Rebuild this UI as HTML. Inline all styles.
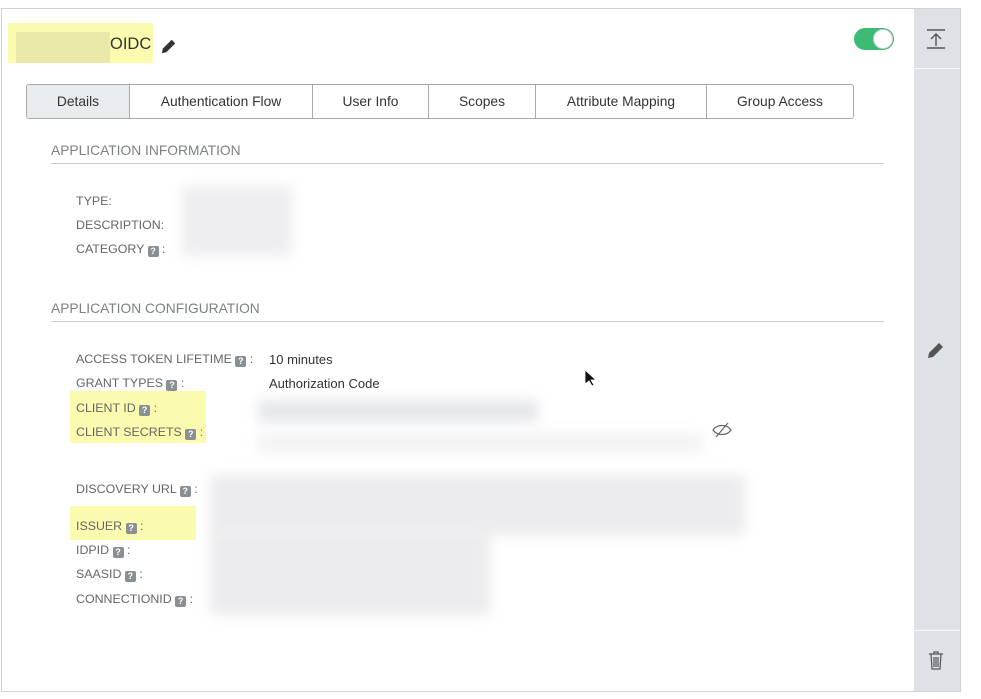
<!DOCTYPE html>
<html><head><style>
*{box-sizing:border-box;margin:0;padding:0}
body{width:981px;height:699px;background:#fff;font-family:"Liberation Sans",sans-serif;position:relative;overflow:hidden;color:#333}
.a{position:absolute}
.panel{left:1px;top:8px;width:960px;height:684px;border:1px solid #cfd3d6;background:#fff}
.side{left:914px;top:9px;width:46px;height:682px;background:#dde2e6}
.lbl{position:absolute;left:76px;font-size:12.4px;color:#666;white-space:nowrap}
.q{display:inline-block;width:11px;height:11px;background:#8a8f94;border-radius:2px;color:#fff;font-size:9px;line-height:11px;text-align:center;font-weight:bold;vertical-align:-1px}
.sec{position:absolute;left:51px;font-size:13.8px;color:#7d8085;width:833px;border-bottom:1px solid #ccc;padding-bottom:5px}
.tabs{left:26px;top:84px;height:35px;display:flex;border:1px solid #aaa;border-radius:3px;overflow:hidden}
.tabs div{font-size:13.8px;color:#333;display:flex;align-items:center;justify-content:center;border-right:1px solid #aaa;height:100%}
.tabs div:last-child{border-right:none}
.blur{position:absolute;background:#e6e7ea;filter:blur(6px)}
.hl{position:absolute;background:#fbfbb0}
</style></head><body>
<div class="a panel"></div>
<div class="a side"></div>
<div class="a" style="left:914px;top:68px;width:46px;height:1px;background:#f4f6f7"></div>
<div class="a" style="left:914px;top:630px;width:46px;height:1px;background:#f4f6f7"></div>
<svg class="a" style="left:926px;top:28px" width="20" height="22" viewBox="0 0 20 22"><path d="M1 2h18M1 20h18M10 18V7M5 11l5-5 5 5" stroke="#555" stroke-width="1.4" fill="none"/></svg>
<svg class="a" style="left:927px;top:341px" width="18" height="18" viewBox="0 0 18 18"><path d="M1 17l1-5L12 2l4 4L6 16z" fill="#555"/></svg>
<svg class="a" style="left:928px;top:651px" width="16" height="19" viewBox="0 0 16 19"><path d="M1 3h14M6 3V1h4v2M3 3l1 15h8l1-15M6 6v10M8 6v10M10 6v10" stroke="#555" stroke-width="1.2" fill="none"/></svg>
<div class="hl" style="left:8px;top:23px;width:145px;height:40px"></div>
<div class="a" style="left:16px;top:32px;width:94px;height:31px;background:#e8e8a8"></div>
<div class="a" style="left:110px;top:35px;font-size:16.5px;color:#333">OIDC</div>
<svg class="a" style="left:161px;top:38px" width="16" height="16" viewBox="0 0 18 18"><path d="M1 17l1-5L12 2l4 4L6 16z" fill="#333"/></svg>
<div class="a" style="left:854px;top:28px;width:40px;height:22px;border-radius:11px;background:#3dba74"></div>
<div class="a" style="left:873px;top:29px;width:20px;height:20px;border-radius:50%;background:#fff;border:1px solid #ccc"></div>
<div class="a tabs">
<div style="width:103px;background:#e8ecef">Details</div>
<div style="width:183px">Authentication Flow</div>
<div style="width:116px">User Info</div>
<div style="width:107px">Scopes</div>
<div style="width:171px">Attribute Mapping</div>
<div style="width:146px">Group Access</div>
</div>
<div class="sec" style="top:143px">APPLICATION INFORMATION</div>
<div class="lbl" style="top:194px">TYPE:</div>
<div class="lbl" style="top:218px">DESCRIPTION:</div>
<div class="lbl" style="top:242px">CATEGORY <span class="q">?</span> :</div>
<div class="blur" style="left:182px;top:186px;width:110px;height:70px;background:#eeeef0"></div>
<div class="sec" style="top:301px">APPLICATION CONFIGURATION</div>
<div class="hl" style="left:70px;top:391px;width:136px;height:52px"></div>
<div class="hl" style="left:70px;top:506px;width:126px;height:34px"></div>
<div class="lbl" style="top:352px">ACCESS TOKEN LIFETIME <span class="q">?</span> :</div>
<div class="a" style="left:269px;top:352px;font-size:13px">10 minutes</div>
<div class="lbl" style="top:376px">GRANT TYPES <span class="q">?</span> :</div>
<div class="a" style="left:269px;top:376px;font-size:13px">Authorization Code</div>
<div class="lbl" style="top:401px">CLIENT ID <span class="q">?</span> :</div>
<div class="lbl" style="top:425px">CLIENT SECRETS <span class="q">?</span> :</div>
<div class="blur" style="left:258px;top:400px;width:280px;height:22px"></div>
<div class="blur" style="left:258px;top:433px;width:445px;height:20px;background:#f3f3f4"></div>
<svg class="a" style="left:711px;top:421px" width="22" height="18" viewBox="0 0 22 18"><path d="M2 9c4-6 14-6 18 0c-4 6-14 6-18 0zM5 16L17 2" stroke="#666" stroke-width="1.2" fill="none"/></svg>
<div class="lbl" style="top:482px">DISCOVERY URL <span class="q">?</span> :</div>
<div class="lbl" style="top:519px">ISSUER <span class="q">?</span> :</div>
<div class="lbl" style="top:543px">IDPID <span class="q">?</span> :</div>
<div class="lbl" style="top:567px">SAASID <span class="q">?</span> :</div>
<div class="lbl" style="top:592px">CONNECTIONID <span class="q">?</span> :</div>
<div class="blur" style="left:210px;top:475px;width:535px;height:60px;background:#ececee"></div>
<div class="blur" style="left:210px;top:530px;width:280px;height:85px;background:#ececee"></div>
<svg class="a" style="left:584px;top:369px" width="12" height="18" viewBox="0 0 12 18"><path d="M1 1v14l4-3 3 5 2-1-3-5h5z" fill="#111" stroke="#fff" stroke-width="0.8"/></svg>
</body></html>
